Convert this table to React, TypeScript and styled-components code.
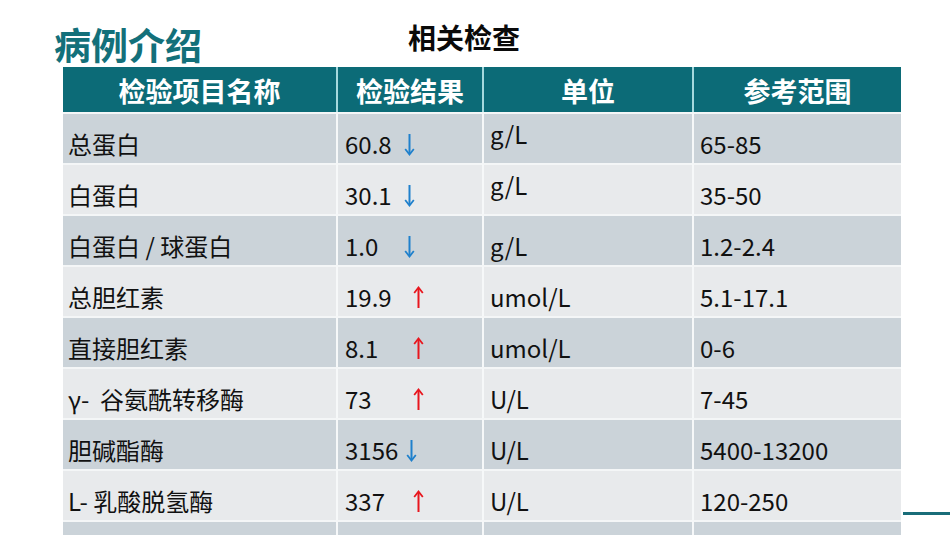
import React from "react";
import styled, { createGlobalStyle } from "styled-components";

const GlobalStyle = createGlobalStyle`
  html, body { margin: 0; padding: 0; background: #ffffff; }
  body { overflow: hidden; font-family: "Noto Sans CJK SC", "Noto Sans", sans-serif; }
`;

const Slide = styled.div`
  position: relative;
  width: 950px;
  height: 535px;
  overflow: hidden;
  background: #ffffff;
`;

const TitleBar = styled.div`
  display: flex;
  align-items: flex-start;
  height: 67px;
  padding-left: 54px;
`;

const Title = styled.h1`
  margin: 18px 0 0 0;
  width: 150px;
  font-size: 37px;
  line-height: 52px;
  font-weight: 700;
  color: #13707a;
  white-space: nowrap;
`;

const Subtitle = styled.h2`
  margin: 20px 0 0 204px;
  font-size: 28px;
  line-height: 34px;
  font-weight: 700;
  color: #0a0a0a;
  white-space: nowrap;
`;

const Table = styled.div`
  margin-left: 63px;
  width: 838px;
  display: grid;
  grid-template-columns: 273px 146px 210px 209px;
`;

const HeadCell = styled.div<{ $first?: boolean }>`
  box-sizing: border-box;
  height: 45px;
  background: #0c6b77;
  color: #ffffff;
  font-size: 27px;
  font-weight: 700;
  display: flex;
  align-items: center;
  justify-content: center;
  border-left: ${(p) => (p.$first ? "none" : "2px solid #a6d9dd")};
  padding-top: 2px;
`;

const Cell = styled.div<{ $dark: boolean; $first?: boolean; $pad: number; $top?: boolean }>`
  box-sizing: border-box;
  height: 51px;
  background: ${(p) => (p.$dark ? "#cbd3d9" : "#e8eaec")};
  border-top: 2px solid #f4f6f7;
  border-left: ${(p) => (p.$first ? "none" : "2px solid #f6f8f9")};
  padding-left: ${(p) => p.$pad}px;
  padding-top: ${(p) => (p.$top ? 5 : 15)}px;
  font-size: 24px;
  line-height: 30px;
  color: #111111;
  display: flex;
  align-items: flex-start;
  white-space: pre;
`;

const Value = styled.span`
  display: inline-block;
  min-width: 51px;
  padding-right: 8px;
`;

const ArrowWrap = styled.span<{ $up: boolean }>`
  display: inline-flex;
  margin-left: ${(p) => (p.$up ? 9 : 0)}px;
  margin-top: 4px;
`;

const Deco = styled.div`
  position: absolute;
  left: 903px;
  top: 512px;
  width: 47px;
  height: 3px;
  background: #196d79;
`;

function Arrow({ up }: { up: boolean }) {
  const color = up ? "#e8161e" : "#1f80cc";
  return (
    <ArrowWrap $up={up}>
      <svg width="11" height="23" viewBox="0 0 11 23">
        {up ? (
          <>
            <line x1="5.5" y1="2" x2="5.5" y2="22" stroke={color} strokeWidth="2" />
            <polyline points="1.2,7 5.5,1.5 9.8,7" fill="none" stroke={color} strokeWidth="1.8" />
          </>
        ) : (
          <>
            <line x1="5.5" y1="1" x2="5.5" y2="21" stroke={color} strokeWidth="2" />
            <polyline points="1.2,16 5.5,21.5 9.8,16" fill="none" stroke={color} strokeWidth="1.8" />
          </>
        )}
      </svg>
    </ArrowWrap>
  );
}

type Row = { name: string; value: string; dir: "up" | "down" | ""; unit: string; range: string; unitTop?: boolean };

const rows: Row[] = [
  { name: "总蛋白", value: "60.8", dir: "down", unit: "g/L", range: "65-85", unitTop: true },
  { name: "白蛋白", value: "30.1", dir: "down", unit: "g/L", range: "35-50", unitTop: true },
  { name: "白蛋白 / 球蛋白", value: "1.0", dir: "down", unit: "g/L", range: "1.2-2.4" },
  { name: "总胆红素", value: "19.9", dir: "up", unit: "umol/L", range: "5.1-17.1" },
  { name: "直接胆红素", value: "8.1", dir: "up", unit: "umol/L", range: "0-6" },
  { name: "γ-  谷氨酰转移酶", value: "73", dir: "up", unit: "U/L", range: "7-45" },
  { name: "胆碱酯酶", value: "3156", dir: "down", unit: "U/L", range: "5400-13200" },
  { name: "L- 乳酸脱氢酶", value: "337", dir: "up", unit: "U/L", range: "120-250" },
  { name: "", value: "", dir: "", unit: "", range: "" },
];

export default function App() {
  return (
    <Slide>
      <GlobalStyle />
      <TitleBar>
        <Title>病例介绍</Title>
        <Subtitle>相关检查</Subtitle>
      </TitleBar>
      <Table>
        <HeadCell $first>检验项目名称</HeadCell>
        <HeadCell>检验结果</HeadCell>
        <HeadCell>单位</HeadCell>
        <HeadCell>参考范围</HeadCell>
        {rows.map((r, i) => {
          const dark = i % 2 === 0;
          return (
            <React.Fragment key={i}>
              <Cell $dark={dark} $first $pad={5}>{r.name}</Cell>
              <Cell $dark={dark} $pad={7}>
                {r.value && <Value>{r.value}</Value>}
                {r.dir && <Arrow up={r.dir === "up"} />}
              </Cell>
              <Cell $dark={dark} $pad={6} $top={r.unitTop}>{r.unit}</Cell>
              <Cell $dark={dark} $pad={6}>{r.range}</Cell>
            </React.Fragment>
          );
        })}
      </Table>
      <Deco />
    </Slide>
  );
}
